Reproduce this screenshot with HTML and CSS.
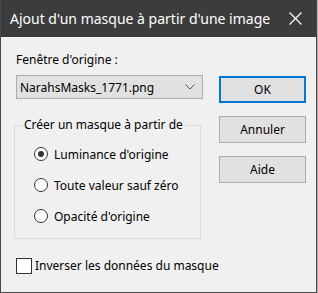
FILE: index.html
```html
<!DOCTYPE html>
<html lang="fr">
<head>
    <meta charset="UTF-8">
    <title>Ajout d'un masque à partir d'une image</title>
    <link rel="stylesheet" href="styles.css">
</head>
<body>

    <div class="window">
        <!-- Barre de titre -->
        <div class="titlebar">
            <span class="title">Ajout d'un masque à partir d'une image</span>
            <svg class="close" width="13" height="13" viewBox="0 0 13 13">
                <path d="M0.5 0.5 L12.5 12.5 M12.5 0.5 L0.5 12.5" stroke="#ffffff" stroke-width="1.2" fill="none"/>
            </svg>
        </div>

        <div class="content">
            <div class="main">
                <div class="left">
                    <div class="label">Fenêtre d'origine :</div>
                    <div class="combo">
                        <span>NarahsMasks_1771.png</span>
                        <svg width="10" height="6" viewBox="0 0 10 6">
                            <path d="M0.5 0.5 L5 5 L9.5 0.5" stroke="#555" stroke-width="1" fill="none"/>
                        </svg>
                    </div>

                    <fieldset class="group">
                        <legend>Créer un masque à partir de</legend>
                        <div class="radio checked"><span class="dot"></span>Luminance d'origine</div>
                        <div class="radio"><span class="dot"></span>Toute valeur sauf zéro</div>
                        <div class="radio"><span class="dot"></span>Opacité d'origine</div>
                    </fieldset>
                </div>

                <div class="buttons">
                    <div class="btn default">OK</div>
                    <div class="btn">Annuler</div>
                    <div class="btn">Aide</div>
                </div>
            </div>

            <div class="check"><span class="box"></span>Inverser les données du masque</div>
        </div>
    </div>

</body>
</html>
```

FILE: styles.css
```css
/* Base */
body {
    margin: 0;
    background: #b4ada3;
    font-family: 'Noto Sans', 'Open Sans', sans-serif;
    font-size: 12px;
    color: #000;
}

/* Fenetre */
.window {
    width: 315px;
    height: 292px;
    background: #f0f0f0;
    border-left: 1px solid #4a4a4a;
    border-right: 1px solid #4a4a4a;
    border-bottom: 1px solid #4a4a4a;
    display: flex;
    flex-direction: column;
}

.titlebar {
    height: 37px;
    background: #3c3c3c;
    color: #fff;
    display: flex;
    align-items: center;
    justify-content: space-between;
    padding: 0 14px 0 9px;
    flex-shrink: 0;
}

.title {
    font-size: 14px;
    white-space: nowrap;
}

.close {
    display: block;
}

.content {
    padding: 15px 0 0 13px;
    display: flex;
    flex-direction: column;
}

.main {
    display: flex;
    gap: 17px;
}

.left {
    width: 188px;
}

.label {
    height: 16px;
    line-height: 16px;
    padding-left: 2px;
    margin-bottom: 7px;
}

.combo {
    margin-left: 2px;
    height: 22px;
    border: 1px solid #adadad;
    background: #e1e1e1;
    display: flex;
    align-items: center;
    justify-content: space-between;
    padding: 0 7px 0 3px;
    box-sizing: content-box;
    width: 175px;
}

.combo svg {
    display: block;
}

/* Groupe */
.group {
    margin: 19px 0 0 0;
    padding: 14px 0 14px 0;
    border: 1px solid #dcdcdc;
    width: 185px;
}

.group legend {
    padding: 0 2px;
    margin-left: 7px;
    line-height: 14px;
    white-space: nowrap;
}

.radio {
    display: flex;
    align-items: center;
    height: 16px;
    margin: 0 0 15px 19px;
}

.radio:last-child {
    margin-bottom: 0;
}

.radio .dot {
    width: 12px;
    height: 12px;
    border: 1px solid #333;
    border-radius: 50%;
    background: #fff;
    margin-right: 6px;
    position: relative;
}

.radio.checked .dot::after {
    content: "";
    position: absolute;
    left: 3px;
    top: 3px;
    width: 6px;
    height: 6px;
    border-radius: 50%;
    background: #333;
}

/* Boutons */
.buttons {
    padding-top: 24px;
    display: flex;
    flex-direction: column;
    gap: 13px;
}

.btn {
    width: 85px;
    height: 25px;
    border: 1px solid #adadad;
    background: #e1e1e1;
    display: flex;
    align-items: center;
    justify-content: center;
}

.btn.default {
    border: 2px solid #0078d7;
    width: 83px;
    height: 23px;
}

/* Case a cocher */
.check {
    margin-top: 18px;
    padding-left: 2px;
    display: flex;
    align-items: center;
}

.check .box {
    width: 14px;
    height: 14px;
    border: 1px solid #333;
    background: #fff;
    margin-right: 3px;
}
```
